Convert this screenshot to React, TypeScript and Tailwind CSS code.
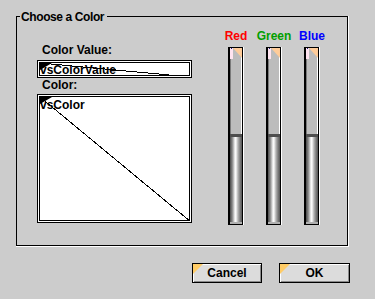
import React from 'react';

const FONT = "font-['Liberation_Sans',Arial,sans-serif]";

// black corner mark + diagonal drawn over the placeholder boxes
const Placeholder = ({ w, h }: { w: number; h: number }) => (
  <svg className="absolute left-0 top-0 pointer-events-none" width={w} height={h}>
    <line x1={0} y1={0} x2={w} y2={h} stroke="#000" strokeWidth={1} shapeRendering="crispEdges" />
    <polygon points="0,0 12,0 0,7" fill="#000" />
  </svg>
);

const Slider = ({ label, color }: { label: string; color: string }) => (
  <div className="w-[38px] flex flex-col items-center">
    <span className={`leading-[14px] ${color}`}>{label}</span>
    <div className="mt-[4px] w-[16px] h-[178px] border-r border-white flex">
      <div className="flex-1 flex flex-col border border-l-2 border-black">
        {/* empty part of the track */}
        <div className="relative h-[86px] bg-[#bcbcbc] border-l border-[#7a7a7a] border-r border-r-white">
          <svg className="absolute left-[-1px] top-0" width={12} height={12}>
            <rect x={0} y={0} width={3} height={11} fill="#ffe4f0" />
            <rect x={1} y={0} width={1} height={1} fill="#202080" />
            <polygon points="3,0 12,0 12,10" fill="#ffcc99" />
          </svg>
        </div>
        <div className="h-[3px] bg-[#4e4e4e]" />
        {/* filled part */}
        <div className="flex-1 flex flex-col bg-[linear-gradient(to_right,#4a4a4a,#858585_18%,#e4e4e4_38%,#ffffff_48%,#b4b4b4_66%,#7c7c7c_84%,#555555)]">
          <div className="flex-1" />
          <div className="h-[2px] bg-[#b0b0b0]" />
        </div>
      </div>
    </div>
  </div>
);

const Button = ({ label, width }: { label: string; width: string }) => (
  <button
    className={`relative ${width} h-[20px] border border-black bg-[#dcdcdc] shadow-[inset_1px_1px_0_#ffffff,inset_-1px_-1px_0_#8a8a8a] leading-[18px] text-center`}
  >
    <svg className="absolute left-0 top-0" width={10} height={10}>
      <polygon points="0,0 10,0 0,10" fill="#ffcc66" />
    </svg>
    <span className="relative">{label}</span>
  </button>
);

export default function App() {
  return (
    <div className={`w-[375px] h-[299px] bg-[#cccccc] flex flex-col text-[12px] font-bold text-black ${FONT}`}>
      {/* group box */}
      <div className="mt-4 ml-4 w-[333px] h-[231px] border-r border-b border-white">
        <div className="h-full border border-black flex flex-col">
          <span className="-mt-[7px] ml-[3px] w-fit pl-px pr-[3px] leading-[14px] tracking-[-0.4px] bg-[#cccccc]">Choose a Color</span>
          <div className="flex">
            {/* color value + swatch */}
            <div className="ml-[20px] w-[155px] flex flex-col">
              <span className="mt-[19px] pl-[5px] leading-[14px]">Color Value:</span>
              <div className="mt-[3px] h-[18px] border border-black bg-white p-px">
                <div className="relative h-full border border-black bg-white overflow-hidden">
                  <span className="block leading-[14px] whitespace-nowrap">vsColorValue</span>
                  <Placeholder w={151} h={14} />
                </div>
              </div>
              <span className="pl-[5px] leading-[14px]">Color:</span>
              <div className="mt-[2px] h-[129px] border border-black bg-white p-px">
                <div className="relative h-full border border-black bg-white overflow-hidden">
                  <span className="block pt-px leading-[14px]">vsColor</span>
                  <Placeholder w={151} h={125} />
                </div>
              </div>
            </div>
            {/* sliders */}
            <div className="ml-[25px] mt-[5px] flex">
              <Slider label="Red" color="text-[#ff0000]" />
              <Slider label="Green" color="text-[#009f00]" />
              <Slider label="Blue" color="text-[#0000ff]" />
            </div>
          </div>
        </div>
      </div>
      {/* buttons */}
      <div className="mt-4 flex justify-end gap-[17px] pr-[25px]">
        <Button label="Cancel" width="w-[70px]" />
        <Button label="OK" width="w-[71px]" />
      </div>
    </div>
  );
}
